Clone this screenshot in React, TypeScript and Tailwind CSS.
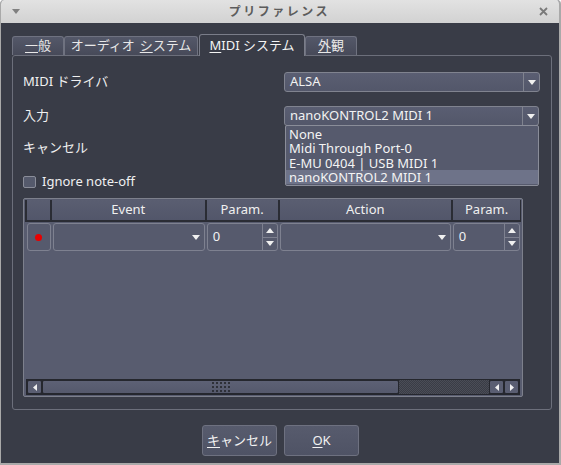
import React from "react";

const font = { fontFamily: '"Noto Sans", "Noto Sans CJK JP", sans-serif' };

function Down({ className = "" }: { className?: string }) {
  return (
    <svg width="8" height="5" viewBox="0 0 8 5" className={className}>
      <path d="M0 0 H8 L4 5 Z" fill="#f0f0f0" />
    </svg>
  );
}

function Up({ className = "" }: { className?: string }) {
  return (
    <svg width="8" height="5" viewBox="0 0 8 5" className={className}>
      <path d="M0 5 H8 L4 0 Z" fill="#f0f0f0" />
    </svg>
  );
}

function Combo({ value, className = "" }: { value: string; className?: string }) {
  return (
    <div className={`flex h-[20px] items-stretch rounded-[3px] border border-[#80838f] bg-gradient-to-b from-[#5a5e72] to-[#53576a] ${className}`}>
      <div className="flex flex-1 items-center pl-[5px] text-[13px] text-[#f2f2f2]">{value}</div>
      <div className="flex w-[16px] items-center justify-center border-l border-[#80838f]">
        <Down />
      </div>
    </div>
  );
}

function Tab({ u, rest, pre = "", selected = false, className = "" }: { u: string; rest: string; pre?: string; selected?: boolean; className?: string }) {
  return (
    <div
      className={
        selected
          ? `relative z-10 -mb-px flex h-[22px] items-center justify-center rounded-t-[3px] border border-b-0 border-[#7a7d89] bg-[#393c47] text-[13px] text-[#f4f4f4] ${className}`
          : `flex h-[19px] items-center justify-center rounded-t-[3px] border border-b-0 border-[#6f7280] bg-gradient-to-b from-[#545869] to-[#474a59] text-[13px] text-[#e8e8e8] ${className}`
      }
    >
      {pre && <span className="mr-[5px]">{pre}</span>}
      <span className="underline underline-offset-2">{u}</span>
      {rest}
    </div>
  );
}

function CellCombo({ className = "" }: { className?: string }) {
  return (
    <div className={`flex h-full items-stretch rounded-[3px] border border-[#7e8190] bg-[#565a6d] ${className}`}>
      <div className="flex-1" />
      <div className="flex w-[16px] items-center justify-center">
        <Down />
      </div>
    </div>
  );
}

function Spin({ className = "" }: { className?: string }) {
  return (
    <div className={`flex h-full items-stretch rounded-[3px] border border-[#7e8190] bg-[#565a6d] ${className}`}>
      <div className="flex flex-1 items-center pl-[5px] text-[13px] text-[#f2f2f2]">0</div>
      <div className="flex w-[15px] flex-col border-l border-[#7e8190]">
        <div className="flex flex-1 items-center justify-center border-b border-[#7e8190]">
          <Up />
        </div>
        <div className="flex flex-1 items-center justify-center">
          <Down />
        </div>
      </div>
    </div>
  );
}

function Head({ text, className = "" }: { text: string; className?: string }) {
  return (
    <div className={`flex items-center justify-center bg-gradient-to-b from-[#5a5e71] to-[#52566a] text-[13px] text-[#f0f0f0] ${className}`}>
      {text}
    </div>
  );
}

function ScrollBtn({ dir }: { dir: "l" | "r" }) {
  return (
    <div className="flex w-[15px] items-center justify-center rounded-[2px] border border-[#25272e] bg-[#5a5e72]">
      <svg width="4" height="7" viewBox="0 0 4 7">
        <path d={dir === "l" ? "M4 0 V7 L0 3.5 Z" : "M0 0 V7 L4 3.5 Z"} fill="#f0f0f0" />
      </svg>
    </div>
  );
}

export default function App() {
  return (
    <div style={font} className="flex h-[465px] w-[561px] flex-col overflow-hidden rounded-t-[4px] border-b-2 border-l border-r-2 border-[#a9a9a9] bg-[#393c47]">
      {/* title bar */}
      <div className="flex h-[23px] shrink-0 items-center bg-gradient-to-b from-[#e2e2e2] to-[#d2d2d2] px-[11px]">
        <svg width="8" height="5" viewBox="0 0 8 5">
          <path d="M0 0 H8 L4 5 Z" fill="#808080" />
        </svg>
        <div className="flex-1 text-center text-[12px] font-bold tracking-[2.5px] text-[#5c5c5c]">プリファレンス</div>
        <svg width="9" height="9" viewBox="0 0 9 9">
          <path d="M1 1 L8 8 M8 1 L1 8" stroke="#7a7a7a" strokeWidth="1.8" />
        </svg>
      </div>

      <div className="flex flex-col pl-[11px] pt-[10px]">
        {/* tabs */}
        <div className="flex h-[22px] items-end">
          <Tab u="一" rest="般" className="w-[52px]" />
          <Tab pre="オーディオ" u="シ" rest="ステム" className="w-[134px]" />
          <Tab u="M" rest="IDI システム" selected className="ml-[1px] w-[106px]" />
          <Tab u="外" rest="観" className="w-[52px]" />
        </div>

        {/* pane */}
        <div className="flex h-[355px] w-[540px] flex-col rounded-[3px] border border-[#6c6f7b] pl-[10px] pt-[16px]">
          <div className="flex h-[20px] items-center">
            <div className="w-[261px] text-[13px] text-[#f0f0f0]">MIDI ドライバ</div>
            <Combo value="ALSA" className="w-[256px]" />
          </div>
          <div className="relative mt-[14px] flex h-[20px] items-center">
            <div className="w-[261px] text-[13px] text-[#f0f0f0]">入力</div>
            <Combo value="nanoKONTROL2 MIDI 1" className="w-[255px]" />
            {/* open popup list */}
            <div className="absolute left-[262px] top-[19px] z-20 w-[254px] rounded-[2px] border border-[#8a8d99] bg-[#565a6d] py-px text-[13px] leading-[14.3px] text-[#f4f4f4]">
              <div className="pl-[3px]">None</div>
              <div className="pl-[3px]">Midi Through Port-0</div>
              <div className="pl-[3px]">E-MU 0404 | USB MIDI 1</div>
              <div className="bg-[#6e7389] pl-[3px]">nanoKONTROL2 MIDI 1</div>
            </div>
          </div>
          <div className="mt-[12px] flex h-[20px] items-center">
            <div className="text-[13px] text-[#f0f0f0]">キャンセル</div>
          </div>
          <div className="mt-[17px] flex h-[14px] items-center gap-[6px]">
            <div className="h-[12px] w-[13px] rounded-[2px] border border-[#8a8d99] bg-[#555a6c]" />
            <div className="text-[13px] text-[#f0f0f0]">Ignore note-off</div>
          </div>

          {/* table */}
          <div className="mt-[9px] flex h-[199px] w-[500px] flex-col rounded-[2px] border border-[#7d808c] bg-[#585c6f] px-px pt-px">
            <div className="flex h-[22px] gap-[2px] border-b-2 border-[#2a2c34] bg-[#2a2c34] pl-[2px] pr-px">
              <Head text="" className="w-[23px]" />
              <Head text="Event" className="w-[153px]" />
              <Head text="Param." className="w-[71px]" />
              <Head text="Action" className="w-[172px]" />
              <Head text="Param." className="w-[67px]" />
            </div>
            <div className="flex h-[29px] gap-[2px] pl-[2px] pr-[1px] pt-px">
              <div className="flex w-[24px] items-center justify-center rounded-[3px] border border-[#7e8190] bg-[#565a6d]">
                <div className="h-[7px] w-[7px] rounded-full bg-[#e80000]" />
              </div>
              <CellCombo className="w-[154px]" />
              <Spin className="w-[72px]" />
              <CellCombo className="w-[173px]" />
              <Spin className="w-[68px]" />
            </div>
            <div className="flex-1" />
            {/* horizontal scrollbar */}
            <div className="mb-[1px] ml-px mr-px flex h-[16px] border border-[#25272e] bg-[#25272e]">
              <ScrollBtn dir="l" />
              <div className="flex w-[357px] items-center justify-center rounded-[2px] border border-[#25272e] bg-gradient-to-b from-[#5d6175] to-[#55596c]">
                <div className="grid grid-cols-5 gap-x-[2px] gap-y-[2px]">
                  {Array.from({ length: 15 }).map((_, i) => (
                    <div key={i} className="h-[2px] w-[2px] bg-[#2e3038]" />
                  ))}
                </div>
              </div>
              <div className="flex-1 bg-[#44474f] bg-[repeating-conic-gradient(#4a4d57_0_25%,#3a3c45_0_50%)] bg-[length:2px_2px]" />
              <ScrollBtn dir="l" />
              <ScrollBtn dir="r" />
            </div>
          </div>
        </div>
      </div>

      {/* buttons */}
      <div className="mt-[15px] flex justify-center gap-[7px] pl-[1px]">
        <div className="flex h-[31px] w-[75px] items-center justify-center rounded-[3px] border border-[#6e7180] bg-gradient-to-b from-[#575b6d] to-[#4f5365] text-[13px] text-[#f2f2f2]">
          <span className="underline underline-offset-2">キ</span>ャンセル
        </div>
        <div className="flex h-[31px] w-[75px] items-center justify-center rounded-[3px] border border-[#6e7180] bg-gradient-to-b from-[#575b6d] to-[#4f5365] text-[13px] text-[#f2f2f2]">
          <span className="underline underline-offset-2">O</span>K
        </div>
      </div>
    </div>
  );
}
